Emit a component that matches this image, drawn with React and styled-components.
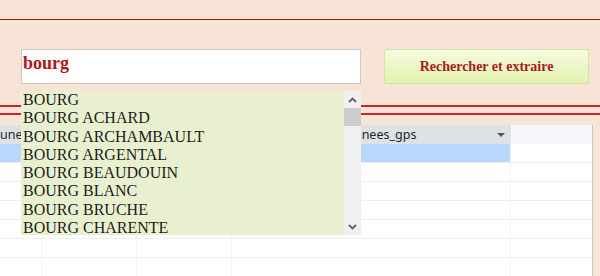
import React from 'react'
import styled, { createGlobalStyle } from 'styled-components'

const towns = [
  'BOURG',
  'BOURG ACHARD',
  'BOURG ARCHAMBAULT',
  'BOURG ARGENTAL',
  'BOURG BEAUDOUIN',
  'BOURG BLANC',
  'BOURG BRUCHE',
  'BOURG CHARENTE',
]

const columns = [42, 95, 95, 279, 81]

const Chevron = ({ up }) => (
  <svg width="9" height="6" viewBox="0 0 9 6">
    <path
      d={up ? 'M1 5 L4.5 1.5 L8 5' : 'M1 1 L4.5 4.5 L8 1'}
      fill="none"
      stroke="#606060"
      strokeWidth="1.8"
    />
  </svg>
)

const Grid = () => (
  <Sheet>
    <HeadRow>
      <HeadCell width={42}><span>une</span></HeadCell>
      <HeadCell width={95} />
      <HeadCell width={95} />
      <HeadCell width={279} center>
        <span>coordonnees_gps</span>
        <Caret />
      </HeadCell>
      <HeadCell width={81} light />
    </HeadRow>
    {Array.from({ length: 7 }).map((_, r) => (
      <Row key={r}>
        {columns.map((w, c) => (
          <Cell key={c} width={w} selected={r === 0 && c < 4} />
        ))}
      </Row>
    ))}
  </Sheet>
)

const App = () => {
  return (
    <>
      <GlobalStyle />
      <Page>
        <TopRule />
        <SearchBar>
          <SearchWrap>
            <SearchInput defaultValue="bourg" />
            <Suggestions>
              <List>
                {towns.map((t) => (
                  <Item key={t}>{t}</Item>
                ))}
              </List>
              <Scrollbar>
                <ScrollArrow><Chevron up /></ScrollArrow>
                <Thumb />
                <Track />
                <ScrollArrow><Chevron /></ScrollArrow>
              </Scrollbar>
            </Suggestions>
          </SearchWrap>
          <Button>Rechercher et extraire</Button>
        </SearchBar>
        <DoubleRule />
        <Grid />
      </Page>
    </>
  )
}

export default App

const GlobalStyle = createGlobalStyle`
  html, body {
    margin: 0;
    padding: 0;
    background: #f7e4d7;
  }
`

const Page = styled.div`
  width: 600px;
  height: 276px;
  overflow: hidden;
  background: #f7e4d7;
  padding-top: 19px;
  box-sizing: border-box;
`

const TopRule = styled.div`
  height: 1px;
  background: #a30f0f;
`

const SearchBar = styled.div`
  display: flex;
  align-items: flex-start;
  margin-top: 29px;
  padding-left: 21px;
`

const SearchWrap = styled.div`
  position: relative;
  width: 340px;
  height: 35px;
`

const SearchInput = styled.input`
  box-sizing: border-box;
  width: 340px;
  height: 35px;
  margin: 0;
  border: 1px solid #cfc8c4;
  background: #fff;
  padding: 0 0 7px 1px;
  outline: none;
  font-family: "Liberation Serif", serif;
  font-weight: bold;
  font-size: 18px;
  color: #b3121c;
`

const Suggestions = styled.div`
  position: absolute;
  top: 42px;
  left: 0;
  width: 340px;
  height: 144px;
  display: flex;
  z-index: 2;
`

const List = styled.div`
  flex: 1;
  background: #e9f0d0;
  overflow: hidden;
  padding-left: 2px;
`

const Item = styled.div`
  font-family: "Liberation Serif", serif;
  font-size: 16px;
  line-height: 18.3px;
  color: #1c1c1c;
  white-space: nowrap;
`

const Scrollbar = styled.div`
  width: 17px;
  background: #f0f0f0;
  display: flex;
  flex-direction: column;
`

const ScrollArrow = styled.div`
  height: 17px;
  display: flex;
  align-items: center;
  justify-content: center;
`

const Thumb = styled.div`
  height: 18px;
  background: #cdcdcd;
`

const Track = styled.div`
  flex: 1;
`

const Button = styled.button`
  box-sizing: border-box;
  margin-left: 23px;
  width: 205px;
  height: 35px;
  border: 1px solid #d3e5a0;
  border-radius: 2px;
  background: linear-gradient(#f5fbe2, #e2f2ad);
  font-family: "Liberation Serif", serif;
  font-weight: bold;
  font-size: 14px;
  color: #a81b22;
  padding: 0;
`

const DoubleRule = styled.div`
  margin-top: 21px;
  height: 10px;
  border-top: 2px solid #c9272d;
  border-bottom: 2px solid #c9272d;
  box-sizing: border-box;
`

const Sheet = styled.div`
  margin-top: 10px;
  width: 593px;
  border-right: 1px solid #c6c6c6;
  box-sizing: border-box;
  background: #fff;
`

const HeadRow = styled.div`
  display: flex;
  height: 19px;
`

const HeadCell = styled.div`
  width: ${(p) => p.width}px;
  flex: none;
  box-sizing: border-box;
  padding-right: ${(p) => (p.center ? '14px' : '0')};
  background: ${(p) => (p.light ? '#f5f7fd' : '#dee1e6')};
  display: flex;
  align-items: center;
  justify-content: ${(p) => (p.center ? 'center' : 'flex-start')};
  position: relative;
  font-family: "Noto Sans", "Open Sans", sans-serif;
  font-size: 12.5px;
  color: #262626;
  overflow: hidden;
  white-space: nowrap;
`

const Caret = styled.div`
  position: absolute;
  right: 6px;
  top: 8px;
  width: 0;
  height: 0;
  border-left: 4px solid transparent;
  border-right: 4px solid transparent;
  border-top: 4px solid #555;
`

const Row = styled.div`
  display: flex;
  height: 19px;
`

const Cell = styled.div`
  width: ${(p) => p.width}px;
  flex: none;
  box-sizing: border-box;
  border-bottom: 1px solid #efefef;
  border-right: 1px solid #f3f3f3;
  background: ${(p) => (p.selected ? '#b5d8fc' : '#fff')};
  &:last-child {
    border-right: none;
  }
`
